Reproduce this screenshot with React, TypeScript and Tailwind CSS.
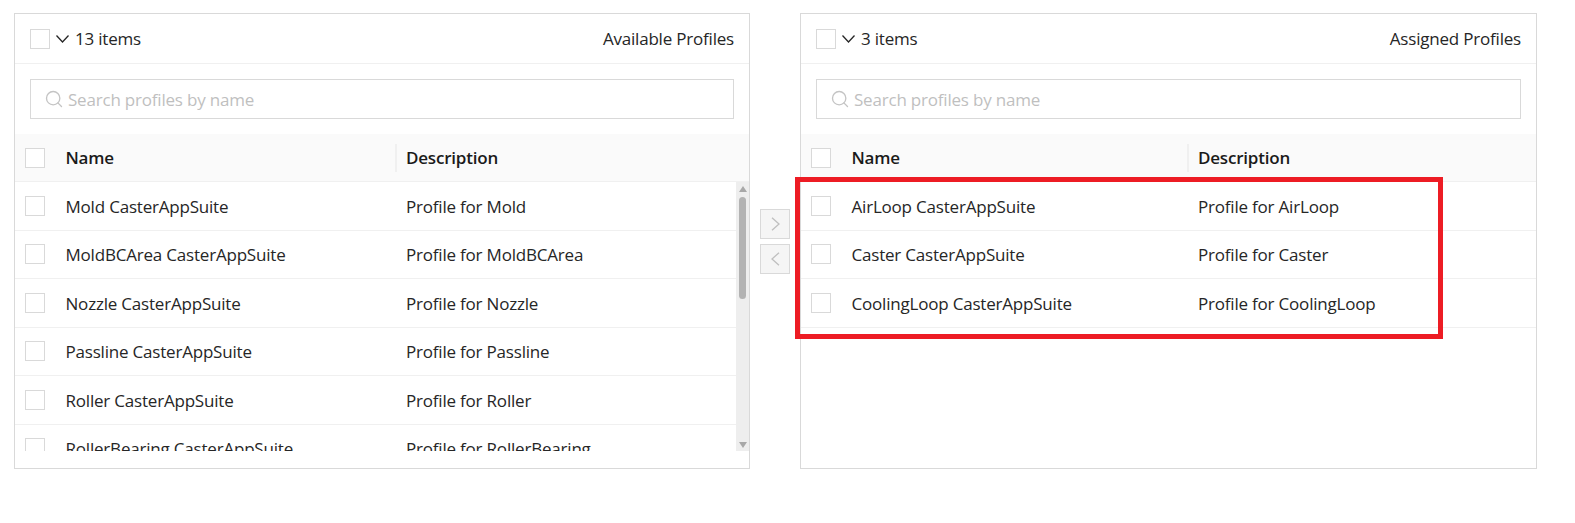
import * as React from 'react';
import { Search } from 'lucide-react';

const available = [
  ['Mold CasterAppSuite', 'Profile for Mold'],
  ['MoldBCArea CasterAppSuite', 'Profile for MoldBCArea'],
  ['Nozzle CasterAppSuite', 'Profile for Nozzle'],
  ['Passline CasterAppSuite', 'Profile for Passline'],
  ['Roller CasterAppSuite', 'Profile for Roller'],
  ['RollerBearing CasterAppSuite', 'Profile for RollerBearing'],
];

const assigned = [
  ['AirLoop CasterAppSuite', 'Profile for AirLoop'],
  ['Caster CasterAppSuite', 'Profile for Caster'],
  ['CoolingLoop CasterAppSuite', 'Profile for CoolingLoop'],
];

function Box() {
  return <span className="block w-5 h-5 shrink-0 border border-[#d9d9d9] bg-white" />;
}

type PanelProps = {
  count: string;
  title: string;
  rows: string[][];
  nameWidth: string;
  scroll?: boolean;
  className: string;
};

function Panel({ count, title, rows, nameWidth, scroll, className }: PanelProps) {
  return (
    <div className={`${className} h-[456px] border border-[#d9d9d9] flex flex-col overflow-hidden`}>
      <div className="h-[50px] shrink-0 flex items-center pl-[15px] pr-[15px] border-b border-[#f0f0f0]">
        <Box />
        <svg className="ml-[6px] w-[13px] h-[8px] shrink-0" viewBox="0 0 13 8" fill="none" stroke="#262626" strokeWidth="1.3">
          <path d="M0.5 0.5 L6.5 7 L12.5 0.5" />
        </svg>
        <span className="ml-[6px]">{count}</span>
        <span className="ml-auto">{title}</span>
      </div>
      <div className="p-[15px] shrink-0">
        <div className="h-10 flex items-center border border-[#d9d9d9] pl-[13px] text-[#bfbfbf]">
          <Search className="w-[20px] h-[20px] shrink-0 text-[#c4c4c4]" strokeWidth={1.6} />
          <span className="ml-[4px] pt-px">Search profiles by name</span>
        </div>
      </div>
      <div className="h-[48px] shrink-0 flex items-center bg-[#fafafa] border-b border-[#f0f0f0] font-semibold text-[#1a1a1a]">
        <div className="pl-[10px] flex items-center shrink-0" style={{ width: nameWidth }}>
          <Box />
          <span className="ml-[20.5px] pt-px">Name</span>
        </div>
        <div className="h-[28px] border-l-2 border-[#f0f0f0] pl-[9px] pt-px flex items-center">Description</div>
      </div>
      <div className="h-[269px] flex">
        <div className="flex-1 overflow-hidden">
          {rows.map(([name, desc]) => (
            <div key={name} className="h-[48.5px] flex items-center border-b border-[#f0f0f0]">
              <div className="pl-[10px] flex items-center shrink-0" style={{ width: nameWidth }}>
                <Box />
                <span className="ml-[20.5px] pt-px whitespace-nowrap">{name}</span>
              </div>
              <div className="pl-[11px] pt-px whitespace-nowrap">{desc}</div>
            </div>
          ))}
        </div>
        {scroll && (
          <div className="w-[13px] shrink-0 bg-[#eeeeee] flex flex-col items-center pt-[4px] pb-[3px]">
            <span className="block w-0 h-0 border-x-[4px] border-x-transparent border-b-[6px] border-b-[#a8a8a8]" />
            <span className="block w-[7px] h-[102px] mt-[5px] rounded-full bg-[#b3b3b3]" />
            <span className="block mt-auto w-0 h-0 border-x-[4px] border-x-transparent border-t-[6px] border-t-[#a8a8a8]" />
          </div>
        )}
      </div>
    </div>
  );
}

function MoveButton({ d }: { d: string }) {
  return (
    <span className="w-[30px] h-[30px] flex items-center justify-center bg-[#f5f5f5] border border-[#d9d9d9]">
      <svg className="w-[9px] h-[14px]" viewBox="0 0 9 14" fill="none" stroke="#bfbfbf" strokeWidth="1.3">
        <path d={d} />
      </svg>
    </span>
  );
}

export default function App() {
  return (
    <div className="relative w-[1575px] h-[523px] bg-white text-[17px] text-[#262626] font-['Open_Sans',sans-serif] tracking-[-0.2px]">
      <div className="flex items-start pt-[13px] pl-[14px]">
        <Panel className="w-[736px]" count="13 items" title="Available Profiles" rows={available} nameWidth="380px" scroll />
        <div className="w-[50px] shrink-0 flex flex-col items-center gap-[5px] pt-[196px]">
          <MoveButton d="M1 0.7 L8 7 L1 13.3" />
          <MoveButton d="M8 0.7 L1 7 L8 13.3" />
        </div>
        <Panel className="w-[737px]" count="3 items" title="Assigned Profiles" rows={assigned} nameWidth="386px" />
      </div>
      {/* annotation drawn over the screenshot */}
      <div className="absolute left-[795px] top-[177px] w-[648px] h-[162px] border-[5px] border-[#ed1c24] pointer-events-none" />
    </div>
  );
}
